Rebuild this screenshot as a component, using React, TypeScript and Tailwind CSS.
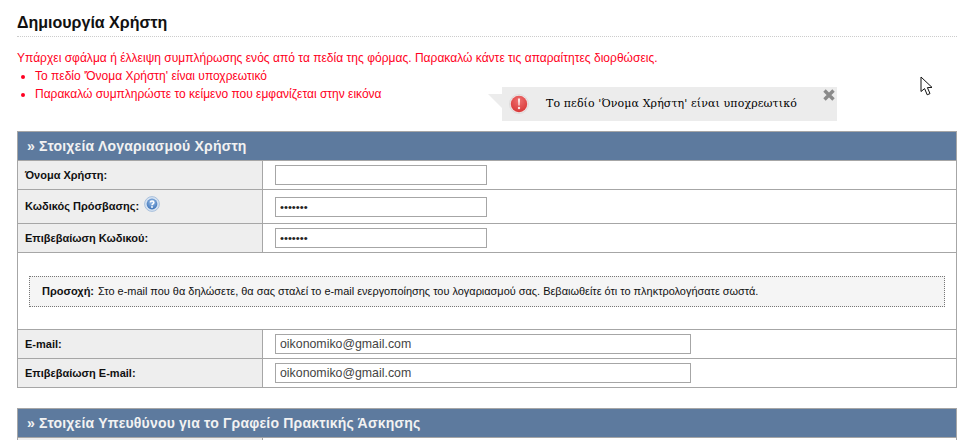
function Row({ label, help, children, h, last }: { label: string; help?: boolean; children: React.ReactNode; h: string; last?: boolean }) {
  return (
    <div className={`flex ${h} ${last ? "" : "border-b border-[#a6a6a6]"}`}>
      <div className="w-[245px] shrink-0 bg-[#eeeeee] border-r border-[#a6a6a6] pl-[7px] flex items-center text-[11px] font-bold text-[#111]">
        <span>{label}</span>
        {help && <HelpIcon />}
      </div>
      <div className="flex-1 pl-[12px] flex items-center">{children}</div>
    </div>
  );
}

function HelpIcon() {
  return (
    <svg width="16" height="16" viewBox="0 0 16 16" className="ml-[5px] mb-[5px]">
      <defs>
        <radialGradient id="hg" cx="50%" cy="35%" r="65%">
          <stop offset="0%" stopColor="#9cc0ea" />
          <stop offset="100%" stopColor="#3f74b8" />
        </radialGradient>
      </defs>
      <circle cx="8" cy="8" r="7.4" fill="#d6e3f2" stroke="#a9c0dc" strokeWidth="1" />
      <circle cx="8" cy="8" r="5.4" fill="url(#hg)" />
      <path d="M6.2 6.4 C6.3 4.6 9.9 4.6 9.9 6.5 C9.9 7.8 8 7.8 8 9.2" fill="none" stroke="#fff" strokeWidth="1.5" />
      <circle cx="8" cy="11" r="0.9" fill="#fff" />
    </svg>
  );
}

function Field({ value, w, dots }: { value?: string; w: string; dots?: boolean }) {
  return (
    <input
      readOnly
      type={dots ? "password" : "text"}
      value={value ?? ""}
      className={`${w} h-[20px] border border-[#a6a6a6] bg-white px-[4px] ${dots ? "text-[11.3px] text-[#222]" : "text-[12.35px] text-[#444]"} outline-none font-['Liberation_Sans',sans-serif]`}
    />
  );
}

function SectionHead({ children }: { children: React.ReactNode }) {
  return (
    <div className="h-[29px] bg-[#5d7a9e] border-b border-[#a6a6a6] pl-[9px] flex items-center text-[14px] font-bold text-[#f2f2f2] tracking-[0.2px]">
      {children}
    </div>
  );
}

export default function App() {
  return (
    <div className="relative h-[440px] w-[973px] overflow-hidden bg-white pl-[17px] pr-[16px] font-['Liberation_Sans',Arial,sans-serif]">
      <h1 className="h-[37px] pt-[13px] border-b border-dotted border-[#cccccc] text-[16px] leading-[20px] font-bold text-[#111]">
        Δημιουργία Χρήστη
      </h1>
      <div className="pt-[12px] h-[94px] text-[12px] leading-[18px] text-[#ff0022]">
        <p className="tracking-[0.02px]">Υπάρχει σφάλμα ή έλλειψη συμπλήρωσης ενός από τα πεδία της φόρμας. Παρακαλώ κάντε τις απαραίτητες διορθώσεις.</p>
        <ul className="list-disc pl-[18px] ml-0 mt-[1px] leading-[17.5px]">
          <li>Το πεδίο 'Όνομα Χρήστη' είναι υποχρεωτικό</li>
          <li>Παρακαλώ συμπληρώστε το κείμενο που εμφανίζεται στην εικόνα</li>
        </ul>
      </div>

      <section className="border border-[#a6a6a6]">
        <SectionHead>» Στοιχεία Λογαριασμού Χρήστη</SectionHead>
        <Row label="Όνομα Χρήστη:" h="h-[29px]">
          <Field w="w-[212px]" />
        </Row>
        <Row label="Κωδικός Πρόσβασης:" help h="h-[34px]">
          <Field w="w-[212px]" value="1234567" dots />
        </Row>
        <Row label="Επιβεβαίωση Κωδικού:" h="h-[29px]">
          <Field w="w-[212px]" value="1234567" dots />
        </Row>
        <div className="h-[77px] border-b border-[#a6a6a6] pl-[11px] pr-[11px] pt-[23px]">
          <div className="h-[31px] border border-dotted border-[#777] bg-[#f5f5f5] pl-[12px] flex items-center text-[10.95px] text-[#111]">
            <b className="mr-[4px] text-[11px]">Προσοχή:</b>
            Στο e-mail που θα δηλώσετε, θα σας σταλεί το e-mail ενεργοποίησης του λογαριασμού σας. Βεβαιωθείτε ότι το πληκτρολογήσατε σωστά.
          </div>
        </div>
        <Row label="E-mail:" h="h-[29px]">
          <Field w="w-[416px]" value="oikonomiko@gmail.com" />
        </Row>
        <Row label="Επιβεβαίωση E-mail:" h="h-[28px]" last>
          <Field w="w-[416px]" value="oikonomiko@gmail.com" />
        </Row>
      </section>

      <section className="mt-[20px] border border-[#a6a6a6]">
        <SectionHead>» Στοιχεία Υπευθύνου για το Γραφείο Πρακτικής Άσκησης</SectionHead>
        <div className="flex h-[20px]">
          <div className="w-[245px] bg-[#eeeeee] border-r border-[#a6a6a6]" />
        </div>
      </section>

      {/* validation tooltip */}
      <div className="absolute left-[502px] top-[87px] flex h-[34px] w-[335px] items-center bg-[#ececec] pl-[44px] font-['DejaVu_Serif',serif] text-[11px] text-[#000]">
        <svg width="14" height="16" viewBox="0 0 14 16" className="absolute left-[-14px] top-[7px]">
          <polygon points="0,0 14,0 14,14" fill="#ececec" />
        </svg>
        <svg width="20" height="20" viewBox="0 0 20 20" className="absolute left-[7px] top-[7px]">
          <defs>
            <radialGradient id="eg" cx="50%" cy="30%" r="70%">
              <stop offset="0%" stopColor="#ef7070" />
              <stop offset="100%" stopColor="#d83838" />
            </radialGradient>
          </defs>
          <circle cx="10" cy="10" r="9.5" fill="#f3e2e2" stroke="#dcdcdc" />
          <circle cx="10" cy="10" r="8.2" fill="url(#eg)" />
          <path d="M8.9 4.5 H11.1 L10.6 11.5 H9.4 Z" fill="#fbe6e6" />
          <circle cx="10" cy="14" r="1.2" fill="#fbe6e6" />
        </svg>
        <span className="tracking-[0.1px]">Το πεδίο 'Όνομα Χρήστη' είναι υποχρεωτικό</span>
        <svg width="12" height="12" viewBox="0 0 12 12" className="absolute left-[321px] top-[2px]">
          <path d="M1.5 1.5 L10.5 10.5 M10.5 1.5 L1.5 10.5" stroke="#8a8a8a" strokeWidth="3.4" />
        </svg>
      </div>

      {/* mouse cursor */}
      <svg width="14" height="21" viewBox="0 0 14 21" className="absolute left-[920px] top-[76px]">
        <path d="M1 1 L1 15.5 L4.6 12.6 L7.2 18.8 L10 17.6 L7.4 11.6 L12 11.4 Z" fill="#fff" stroke="#111" strokeWidth="1" strokeLinejoin="miter" />
      </svg>
    </div>
  );
}
